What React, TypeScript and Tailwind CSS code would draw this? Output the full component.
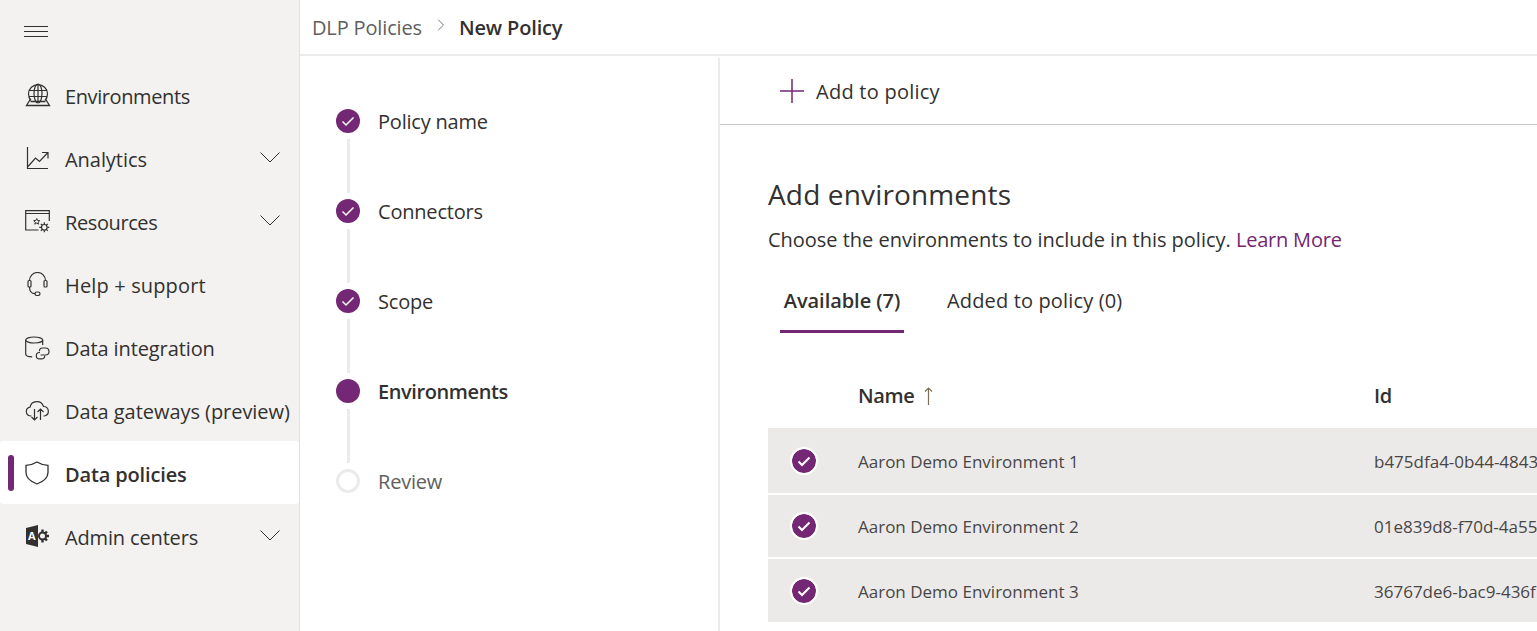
import { ChevronRight } from "lucide-react";
import type { ReactNode } from "react";

const iconProps = {
  width: 26,
  height: 26,
  viewBox: "0 0 26 26",
  fill: "none",
  stroke: "#323130",
  strokeWidth: 1.2,
};

const GlobeIcon = () => (
  <svg {...iconProps}>
    <path d="M6 17.5a9.5 9.5 0 1 1 14 0" />
    <ellipse cx="13" cy="10.5" rx="4" ry="9.5" />
    <path d="M4 7.5h18M4 13.5h18M13 1v18" />
    <path d="M5.5 16l-4 6.5h23l-4-6.5M5.5 18.5h15" strokeWidth="1.3" />
  </svg>
);

const ChartIcon = () => (
  <svg {...iconProps}>
    <path d="M2.5 1v21.5H23" />
    <path d="M3 20.5l7.5-8.5 4 3.5 8-8.5M17 6.5h6v6" />
  </svg>
);

const ResourcesIcon = () => (
  <svg {...iconProps}>
    <path d="M13.5 21H.7V1.7h23.6V12M.7 4.5h23.6" strokeWidth="1.2" />
    <path d="M11.7 9.5l.9 2 2.1.2-1.6 1.4.5 2.1-1.9-1.1-1.9 1.100.5-2.1-1.6-1.4 2.1-.2z" strokeWidth="1" />
    <circle cx="19.3" cy="18.3" r="2.8" strokeWidth="1.2" />
    <path
      d="M19.3 13.3v2M19.3 21.3v2M14.3 18.3h2M22.3 18.3h2M15.8 14.8l1.4 1.4M21.4 20.4l1.400 1.400M15.8 21.8l1.4-1.4M21.4 16.2l1.4-1.4"
      strokeWidth="1.2"
    />
  </svg>
);

const HeadsetIcon = () => (
  <svg {...iconProps}>
    <path d="M4.5 8.5a8 8 0 0 1 16 0" />
    <rect x="3" y="8.5" width="3" height="6.5" rx="1" />
    <rect x="19" y="8.5" width="3" height="6.5" rx="1" />
    <path d="M4.5 15c0 4 2 6.7 5.5 6.7" />
    <rect x="10" y="20" width="5" height="3.5" rx="1.7" />
  </svg>
);

const DataIcon = () => (
  <svg {...iconProps}>
    <ellipse cx="9.2" cy="5" rx="8.5" ry="3" />
    <path d="M.7 5v14c0 1.800 3 2.800 6.500 2.800M17.700 5v5" />
    <path d="M15 17.5h-.5a3.200 3.200 0 0 0-3.200 3.200 3.200 3.200 0 0 0 3.200 3.200h2a3.200 3.200 0 0 0 3.200-3.200" />
    <path d="M15.500 20h5a3.500 3.500 0 0 0 0-7h-3a3.200 3.200 0 0 0-3.100 3.200" />
  </svg>
);

const CloudIcon = () => (
  <svg {...iconProps}>
    <path d="M6.500 18H5.500a4.500 4.500 0 0 1-.5-8.900A7 7 0 0 1 18.500 8.500 4.800 4.800 0 0 1 19.500 18H18.500" />
    <path d="M9.500 11v11M6.500 19l3 3 3-3M15.500 22V11M12.500 14l3-3 3 3" />
  </svg>
);

const ShieldIcon = () => (
  <svg {...iconProps} strokeWidth={1.3}>
    <path d="M12 1c3 2 6.500 3 11 3.300v7.200C23 17 18.500 20.500 12 23 5.500 20.500 1 17 1 11.500V4.300C5.500 4 9 3 12 1z" />
  </svg>
);

const AdminIcon = () => (
  <svg width="26" height="26" viewBox="0 0 26 26">
    <circle cx="17.500" cy="12" r="3.500" fill="none" stroke="#323130" strokeWidth="2" />
    <path
      d="M17.500 5.500v3M17.500 15.500v3M21 12h3M19.900 9.600l2.100-2.100M19.900 14.400l2.100 2.100"
      fill="none"
      stroke="#323130"
      strokeWidth="2.400"
    />
    <path d="M1 4l12-3v22l-12-3z" fill="#323130" />
    <text x="3" y="16" fontSize="11" fontWeight="700" fill="#ffffff" fontFamily="'Open Sans', sans-serif">
      A
    </text>
  </svg>
);

const nav: { label: string; icon: ReactNode; track: string; chevron?: boolean; active?: boolean }[] = [
  { label: "Environments", icon: <GlobeIcon />, track: "tracking-[-0.4px]" },
  { label: "Analytics", icon: <ChartIcon />, track: "tracking-[-0.05px]", chevron: true },
  { label: "Resources", icon: <ResourcesIcon />, track: "tracking-[-0.4px]", chevron: true },
  { label: "Help + support", icon: <HeadsetIcon />, track: "tracking-[0.15px]" },
  { label: "Data integration", icon: <DataIcon />, track: "tracking-[-0.1px]" },
  { label: "Data gateways (preview)", icon: <CloudIcon />, track: "tracking-[-0.05px]" },
  { label: "Data policies", icon: <ShieldIcon />, track: "tracking-[-0.15px]", active: true },
  { label: "Admin centers", icon: <AdminIcon />, track: "tracking-[-0.15px]", chevron: true },
];

const steps = [
  { label: "Policy name", state: "done" },
  { label: "Connectors", state: "done" },
  { label: "Scope", state: "done" },
  { label: "Environments", state: "current" },
  { label: "Review", state: "todo" },
];

const rows = [
  { name: "Aaron Demo Environment 1", id: "b475dfa4-0b44-4843", height: "h-[65px]" },
  { name: "Aaron Demo Environment 2", id: "01e839d8-f70d-4a55", height: "h-[62px]" },
  { name: "Aaron Demo Environment 3", id: "36767de6-bac9-436f", height: "h-[63px]" },
];

function Check({ weight = 1.5 }: { weight?: number }) {
  return (
    <svg width="16" height="16" viewBox="0 0 16 16" fill="none" stroke="#ffffff" strokeWidth={weight}>
      <path d="M2.500 8.500l3.500 3.500 7.500-7.500" />
    </svg>
  );
}

function Sidebar() {
  return (
    <aside className="flex h-full w-[300px] shrink-0 flex-col border-r border-[#e3e1df] bg-[#f3f2f1]">
      <div className="flex h-[63px] shrink-0 flex-col gap-1 pl-6 pt-[26px]">
        <div className="h-px w-6 bg-[#323130]" />
        <div className="h-px w-6 bg-[#323130]" />
        <div className="h-px w-6 bg-[#323130]" />
      </div>
      {nav.map((item) => (
        <div
          key={item.label}
          className={`relative flex h-[63px] shrink-0 items-center pl-[25px] pt-[3px] ${
            item.active ? "rounded-[3px] bg-white" : ""
          }`}
        >
          {item.active && (
            <div className="absolute left-2 top-[14px] h-9 w-1.5 rounded-[3px] bg-[#742774]" />
          )}
          <span className="flex w-[40px] shrink-0">{item.icon}</span>
          <span
            className={`whitespace-nowrap pt-0.5 text-[20px] text-[#323130] ${item.track} ${
              item.active ? "font-semibold" : ""
            }`}
          >
            {item.label}
          </span>
          {item.chevron && (
            <svg
              width="20"
              height="11"
              viewBox="0 0 20 11"
              fill="none"
              stroke="#323130"
              strokeWidth="1"
              className="absolute right-[19px] top-[26px]"
            >
              <path d="M.5.500L10 10 19.500.500" />
            </svg>
          )}
        </div>
      ))}
    </aside>
  );
}

function Stepper() {
  return (
    <div className="h-full w-[418px] shrink-0 pl-9 pt-[51px]">
      {steps.map((step, i) => (
        <div key={step.label}>
          <div className="flex h-6 items-center gap-[18px]">
            {step.state === "done" && (
              <span className="flex h-6 w-6 items-center justify-center rounded-full bg-[#742774]">
                <Check />
              </span>
            )}
            {step.state === "current" && <span className="h-6 w-6 rounded-full bg-[#742774]" />}
            {step.state === "todo" && (
              <span className="h-6 w-6 rounded-full border-[3px] border-[#edebe9] bg-white" />
            )}
            <span
              className={`pt-0.5 text-[20px] ${
                step.state === "current"
                  ? "font-semibold tracking-[-0.4px] text-[#323130]"
                  : step.state === "todo"
                    ? "tracking-[-0.2px] text-[#605e5c]"
                    : "tracking-[-0.2px] text-[#323130]"
              }`}
            >
              {step.label}
            </span>
          </div>
          {i < steps.length - 1 && (
            <div className="ml-[10.5px] mt-1.5 mb-1.5 h-[54px] w-[3px] bg-[#edebe9]" />
          )}
        </div>
      ))}
    </div>
  );
}

function Table() {
  return (
    <div className="mt-[35px]">
      <div className="flex h-[60px] items-center pb-1 text-[20px] font-semibold tracking-[-0.4px] text-[#323130]">
        <span className="flex w-[606px] shrink-0 items-center gap-[10px] pl-[90px]">
          Name
          <svg width="9" height="18" viewBox="0 0 9 18" fill="none" stroke="#7c6f57" strokeWidth="1.200">
            <path d="M4.500 18V1M1 4.500L4.500 1 8 4.500" />
          </svg>
        </span>
        <span>Id</span>
      </div>
      <div className="flex flex-col gap-0.5">
        {rows.map((row) => (
          <div key={row.name} className={`flex items-center bg-[#ecEAe8] ${row.height}`}>
            <span className="ml-6 flex h-6 w-6 shrink-0 items-center justify-center rounded-full bg-[#742774] outline-2 outline-white">
              <Check weight={2} />
            </span>
            <span className="ml-[42px] w-[516px] shrink-0 whitespace-nowrap pt-0.5 text-[17px] text-[#484644]">
              {row.name}
            </span>
            <span className="whitespace-nowrap pt-0.5 text-[17px] text-[#484644]">{row.id}</span>
          </div>
        ))}
      </div>
    </div>
  );
}

export default function App() {
  return (
    <div className="flex h-[631px] w-[1537px] overflow-hidden bg-white font-['Open_Sans',sans-serif]">
      <Sidebar />
      <div className="flex min-w-0 flex-1 flex-col">
        <header className="flex h-[56px] shrink-0 items-center border-b-2 border-[#edebe9] pl-3 pt-0.5">
          <span className="text-[20px] tracking-[-0.15px] text-[#605e5c]">DLP Policies</span>
          <ChevronRight size={20} strokeWidth={1} color="#605e5c" className="ml-[9px] mr-2 -mt-1.5" />
          <span className="text-[20px] font-semibold tracking-[-0.15px] text-[#323130]">New Policy</span>
        </header>
        <div className="flex min-h-0 flex-1 pt-0.5">
          <Stepper />
          <main className="min-w-0 flex-1 overflow-hidden border-l-2 border-[#edebe9]">
            <div className="flex h-[67px] items-center gap-[11px] border-b border-[#c8c6c4] pl-[58px]">
              <svg width="26" height="26" viewBox="0 0 26 26" stroke="#742774" strokeWidth="1.500" className="ml-px">
                <path d="M13 1v24M1 13h24" />
              </svg>
              <span className="pt-0.5 text-[20px] tracking-[0.25px] text-[#323130]">Add to policy</span>
            </div>
            <div className="pl-[48px] pt-[47px]">
              <h1 className="text-[28px] leading-[44px] tracking-[0.15px] text-[#323130]">Add environments</h1>
              <p className="mt-[10px] whitespace-nowrap text-[20px] leading-[28px] tracking-[-0.02px] text-[#323130]">
                Choose the environments to include in this policy.{" "}
                <a className="tracking-[-0.2px] text-[#742774]">Learn More</a>
              </p>
              <div className="mt-[20px] flex items-start text-[20px] text-[#323130]">
                <div className="ml-3 flex h-[59px] w-[124px] items-start justify-center border-b-[3px] border-[#742774] pt-[12px] font-semibold tracking-[-0.05px]">
                  Available (7)
                </div>
                <div className="ml-[43px] pt-[12px] tracking-[0.15px]">Added to policy (0)</div>
              </div>
              <Table />
            </div>
          </main>
        </div>
      </div>
    </div>
  );
}
